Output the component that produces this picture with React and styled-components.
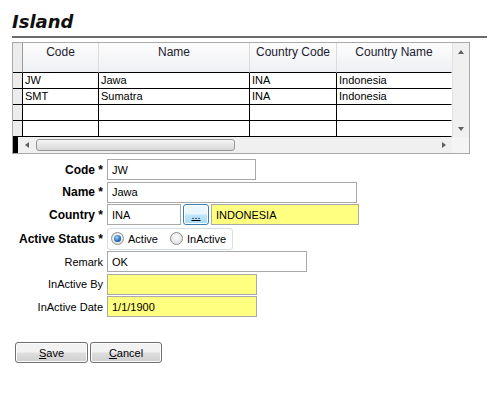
import React from "react";
import styled, { createGlobalStyle, css } from "styled-components";

const GlobalStyle = createGlobalStyle`
  body {
    margin: 0;
    background: #ffffff;
    font-family: "Liberation Sans", Arial, sans-serif;
    color: #000;
  }
`;

const Page = styled.div`
  width: 500px;
  padding: 11px 0 0 12px;
  box-sizing: border-box;
`;

const Title = styled.h1`
  margin: 0;
  width: 475px;
  padding-bottom: 3px;
  border-bottom: 2px solid #6b6b6b;
  font: italic bold 18px/22px "DejaVu Sans", Verdana, sans-serif;
  color: #111;
`;

const GridBox = styled.div`
  margin-top: 4px;
  width: 458px;
  height: 112px;
  box-sizing: border-box;
  border: 1px solid #a9a9a9;
  display: grid;
  grid-template-columns: 439px 17px;
  grid-template-rows: 94px 16px;
`;

const Body = styled.div`
  display: flex;
  flex-direction: column;
`;

const cols = "10px 76px 151px 87px 115px";

const HeadRow = styled.div`
  display: grid;
  grid-template-columns: ${cols};
  height: 30px;
`;

const HeadCell = styled.div`
  box-sizing: border-box;
  border-bottom: 1px solid #000;
  border-right: 1px solid ${({ $last }) => ($last ? "transparent" : "#dcdcdc")};
  background: linear-gradient(#fdfdfd, #eef0f3);
  font-size: 12px;
  line-height: 14px;
  padding-top: 2px;
  text-align: center;
  color: #1c2030;
  ${({ $sel }) =>
    $sel &&
    css`
      background: #ececec;
      border-right: 1px solid #9a9a9a;
    `}
`;

const DataRow = styled.div`
  display: grid;
  grid-template-columns: ${cols};
  height: 16px;
`;

const Cell = styled.div`
  box-sizing: border-box;
  border-bottom: 1px solid #000;
  border-right: 1px solid ${({ $last }) => ($last ? "transparent" : "#000")};
  font-size: 11px;
  line-height: 15px;
  padding-left: 2px;
  white-space: nowrap;
  overflow: hidden;
  background: ${({ $sel }) => ($sel ? "#ececec" : "#fff")};
`;

const HScroll = styled.div`
  display: flex;
  align-items: center;
  background: #f0f0f0;
  height: 16px;
`;

const FrozenMark = styled.div`
  width: 5px;
  height: 16px;
  background: #000;
`;

const ArrowBox = styled.div`
  width: ${({ $w }) => $w || 17}px;
  height: ${({ $h }) => $h || 16}px;
  display: flex;
  align-items: center;
  justify-content: center;
  flex: none;
`;

const Track = styled.div`
  flex: 1;
  height: 16px;
  display: flex;
  align-items: center;
`;

const Thumb = styled.div`
  width: 199px;
  height: 12px;
  margin-left: 1px;
  box-sizing: border-box;
  border: 1px solid #979797;
  border-radius: 3px;
  background: linear-gradient(#f5f5f5, #d8d8d8);
`;

const VScroll = styled.div`
  grid-row: 1;
  grid-column: 2;
  background: #f0f0f0;
  display: flex;
  flex-direction: column;
  justify-content: space-between;
  border-left: 1px solid #e2e2e2;
`;

const Corner = styled.div`
  background: #f4f4f4;
`;

const Form = styled.div`
  margin-top: 5px;
  display: flex;
  flex-direction: column;
  gap: 1.5px;
`;

const Row = styled.div`
  display: flex;
  align-items: center;
  height: ${({ $h }) => $h || 21}px;
  margin-top: ${({ $mt }) => $mt || 0}px;
`;

const Label = styled.label`
  width: 95px;
  box-sizing: border-box;
  padding-right: 4px;
  text-align: right;
  font-size: ${({ $bold }) => ($bold ? 12 : 11)}px;
  font-weight: ${({ $bold }) => ($bold ? "bold" : "normal")};
  white-space: nowrap;
`;

const Field = styled.input`
  width: ${({ $w }) => $w}px;
  height: 21px;
  box-sizing: border-box;
  border: 1px solid #a9a9a9;
  background: ${({ $yellow }) => ($yellow ? "#ffff80" : "#fff")};
  padding: 0 4px;
  margin: 0;
  font: 11px "Liberation Sans", Arial, sans-serif;
  color: #000;
  outline: none;
`;

const Fields = styled.div`
  display: flex;
  gap: 2px;
  align-items: center;
`;

const LookupButton = styled.button`
  width: 26px;
  height: 21px;
  box-sizing: border-box;
  border: 1px solid #3c7fb1;
  border-radius: 3px;
  box-shadow: inset 0 0 0 1px #fff;
  background: linear-gradient(#eaf6fd 45%, #bee6fd 55%, #a7d9f5);
  font: 11px "Liberation Sans", Arial, sans-serif;
  padding: 0;
  text-decoration: underline;
  color: #000;
`;

const Group = styled.div`
  width: 126px;
  height: 22px;
  box-sizing: border-box;
  border: 1px solid #d5dfe5;
  border-radius: 3px;
  display: flex;
  align-items: center;
  padding-left: 3px;
`;

const Option = styled.label`
  display: flex;
  align-items: center;
  gap: 4px;
  font-size: 11px;
  margin-right: 12px;
`;

const Radio = styled.span`
  position: relative;
  width: 13px;
  height: 13px;
  box-sizing: border-box;
  border-radius: 50%;
  border: 1px solid #8e8f8f;
  background: radial-gradient(circle at 50% 40%, #ffffff, #d6d6d6);
  flex: none;
  ${({ $checked }) =>
    $checked &&
    css`
      &::after {
        content: "";
        position: absolute;
        left: 2px;
        top: 2px;
        width: 7px;
        height: 7px;
        border-radius: 50%;
        background: radial-gradient(circle at 40% 35%, #9ad6ff, #1b5ea8 65%, #0c3d77);
      }
    `}
`;

const Buttons = styled.div`
  display: flex;
  gap: 2px;
  margin: 25px 0 0 3px;
`;

const Button = styled.button`
  width: ${({ $w }) => $w}px;
  height: 21px;
  box-sizing: border-box;
  border: 1px solid #707070;
  border-radius: 3px;
  box-shadow: inset 0 0 0 1px #fcfcfc;
  background: linear-gradient(#f2f2f2 45%, #dddddd 55%, #cfcfcf);
  font: 11px "Liberation Sans", Arial, sans-serif;
  color: #000;
  padding: 0;
  u {
    text-decoration: underline;
  }
`;

const Tri = ({ dir }) => {
  const pts = {
    left: "4,0 4,6 0,3",
    right: "0,0 0,6 4,3",
    up: "0,4 6,4 3,0",
    down: "0,0 6,0 3,4",
  }[dir];
  const horiz = dir === "left" || dir === "right";
  return (
    <svg width={horiz ? 4 : 6} height={horiz ? 6 : 4} viewBox={horiz ? "0 0 4 6" : "0 0 6 4"}>
      <polygon points={pts} fill="#606060" />
    </svg>
  );
};

const rows = [
  ["JW", "Jawa", "INA", "Indonesia"],
  ["SMT", "Sumatra", "INA", "Indonesia"],
  ["", "", "", ""],
  ["", "", "", ""],
];

const headers = ["Code", "Name", "Country Code", "Country Name"];

export default function App() {
  return (
    <Page>
      <GlobalStyle />
      <Title>Island</Title>

      <GridBox>
        <Body>
          <HeadRow>
            <HeadCell $sel />
            {headers.map((h, i) => (
              <HeadCell key={h} $last={i === headers.length - 1}>
                {h}
              </HeadCell>
            ))}
          </HeadRow>
          {rows.map((r, i) => (
            <DataRow key={i}>
              <Cell $sel />
              {r.map((v, j) => (
                <Cell key={j} $last={j === r.length - 1}>
                  {v}
                </Cell>
              ))}
            </DataRow>
          ))}
        </Body>
        <VScroll>
          <ArrowBox $w={16} $h={17}>
            <Tri dir="up" />
          </ArrowBox>
          <ArrowBox $w={16} $h={17}>
            <Tri dir="down" />
          </ArrowBox>
        </VScroll>
        <HScroll>
          <FrozenMark />
          <ArrowBox>
            <Tri dir="left" />
          </ArrowBox>
          <Track>
            <Thumb />
          </Track>
          <ArrowBox>
            <Tri dir="right" />
          </ArrowBox>
        </HScroll>
        <Corner />
      </GridBox>

      <Form>
        <Row>
          <Label $bold>Code *</Label>
          <Field $w={149} defaultValue="JW" readOnly />
        </Row>
        <Row>
          <Label $bold>Name *</Label>
          <Field $w={250} defaultValue="Jawa" readOnly />
        </Row>
        <Row>
          <Label $bold>Country *</Label>
          <Fields>
            <Field $w={74} defaultValue="INA" readOnly />
            <LookupButton>...</LookupButton>
            <Field $w={148} $yellow defaultValue="INDONESIA" readOnly />
          </Fields>
        </Row>
        <Row $h={22} $mt={1}>
          <Label $bold>Active Status *</Label>
          <Group>
            <Option>
              <Radio $checked />
              Active
            </Option>
            <Option>
              <Radio />
              InActive
            </Option>
          </Group>
        </Row>
        <Row>
          <Label>Remark</Label>
          <Field $w={200} defaultValue="OK" readOnly />
        </Row>
        <Row>
          <Label>InActive By</Label>
          <Field $w={150} $yellow defaultValue="" readOnly />
        </Row>
        <Row>
          <Label>InActive Date</Label>
          <Field $w={150} $yellow defaultValue="1/1/1900" readOnly />
        </Row>
      </Form>

      <Buttons>
        <Button $w={73}>
          <u>S</u>ave
        </Button>
        <Button $w={72}>
          <u>C</u>ancel
        </Button>
      </Buttons>
    </Page>
  );
}
